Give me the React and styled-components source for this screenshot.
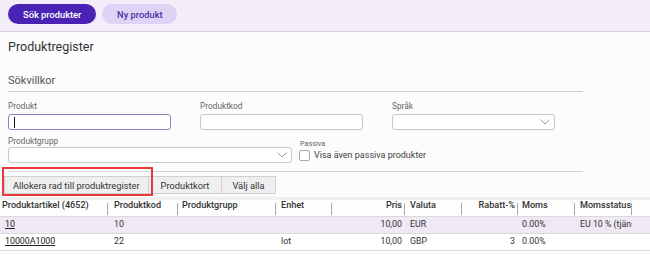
import React from 'react';
import styled, { createGlobalStyle } from 'styled-components';

const GlobalStyle = createGlobalStyle`
  html, body {
    margin: 0;
    padding: 0;
    background: #fcfcfc;
    font-family: Roboto, "Liberation Sans", sans-serif;
    color: #333;
  }
`;

const Page = styled.div`
  width: 650px;
  height: 254px;
  overflow: hidden;
`;

const TopBar = styled.div`
  height: 32px;
  box-sizing: border-box;
  background: #f3ecf9;
  border-bottom: 1px solid #d6d0da;
  padding: 4px 8px 0;
  display: flex;
  gap: 6px;
  align-items: flex-start;
`;

const PillButton = styled.button`
  height: 20px;
  border: none;
  border-radius: 10px;
  padding: 0 ${props => props.primary ? '15px' : '14px'};
  min-width: ${props => props.primary ? 88 : 75}px;
  font-family: inherit;
  font-size: 9.3px;
  font-weight: 500;
  background: ${props => props.primary ? '#4a23b5' : '#ddd3f4'};
  color: ${props => props.primary ? '#ffffff' : '#4b2fa9'};
`;

const Content = styled.div`
  padding: 0 8px;
  width: 575px;
`;

const Title = styled.h1`
  margin: 0;
  padding-top: 7px;
  font-size: 12.5px;
  line-height: 16px;
  font-weight: 400;
  color: #333;
`;

const SectionTitle = styled.h2`
  margin: 19px 0 0;
  font-size: 11px;
  line-height: 14px;
  font-weight: 400;
  color: #555;
  padding-bottom: 3px;
  border-bottom: 1px solid #cfcfcf;
`;

const FieldRow = styled.div`
  display: flex;
  gap: ${props => props.gap}px;
  margin-top: ${props => props.top}px;
`;

const Field = styled.div`
  display: flex;
  flex-direction: column;
  width: ${props => props.width}px;
  padding-top: ${props => props.offset || 0}px;
`;

const Label = styled.label`
  font-size: ${props => props.small ? 7.3 : 8.3}px;
  line-height: 11px;
  height: 11px;
  color: #666;
`;

const InputBox = styled.div`
  height: 16px;
  box-sizing: border-box;
  background: #fff;
  border: 1px solid ${props => props.focused ? '#8b80c6' : '#c8c8c8'};
  border-radius: 3px;
  display: flex;
  align-items: center;
  justify-content: ${props => props.select ? 'flex-end' : 'flex-start'};
  padding: 0 ${props => props.select ? 4 : 5}px;
  margin-top: ${props => props.gapTop}px;
`;

const Caret = styled.span`
  width: 1.2px;
  height: 11px;
  background: #111;
`;

const Chevron = () => (
  <svg width="10" height="6" viewBox="0 0 10 6">
    <polyline points="0.5,0.6 5,5 9.5,0.6" fill="none" stroke="#9c9c9c" strokeWidth="1" />
  </svg>
);

const CheckRow = styled.label`
  display: flex;
  align-items: center;
  gap: 4px;
  margin-top: 1px;
  margin-left: -1px;
  font-size: 9px;
  line-height: 11px;
  color: #444;
`;

const CheckBox = styled.span`
  width: 11px;
  height: 11px;
  box-sizing: border-box;
  border: 1px solid #a8a8a8;
  border-radius: 2px;
  background: #fff;
`;

const Divider = styled.div`
  margin-top: 8px;
  border-top: 1px solid #d6d6d6;
`;

const Toolbar = styled.div`
  display: flex;
  padding-left: 4px;
  margin-top: 4px;
`;

const Marked = styled.div`
  position: relative;
  display: flex;

  &::after {
    content: '';
    position: absolute;
    left: -2px;
    right: -4px;
    top: -9px;
    bottom: -2px;
    border: 2px solid #e8383c;
    pointer-events: none;
  }
`;

const ToolButton = styled.button`
  height: 18px;
  box-sizing: border-box;
  border: 1px solid #d0d0d0;
  border-left-width: ${props => props.joined ? 0 : 1}px;
  background: #efefef;
  font-family: inherit;
  font-size: 9.3px;
  color: #333;
  padding: 0 ${props => props.pad}px;
`;

const Grid = styled.div`
  margin-top: 3px;
  border-top: 3px solid #f0f0f0;
  display: grid;
  grid-template-columns: 108px 70px 98px 56px 73px 57px 56px 57px 57px 18px;
`;

const HeadCell = styled.div`
  position: relative;
  height: 17px;
  box-sizing: border-box;
  border-bottom: 1px solid #dadada;
  background: #fdfdfd;
  padding: 0 3px 0 ${props => props.first ? 2 : props.pad || 5}px;
  font-size: 9.1px;
  line-height: 11px;
  font-weight: 500;
  color: #333;
  text-align: ${props => props.right ? 'right' : 'left'};
  white-space: nowrap;
  overflow: hidden;

  &::after {
    content: '';
    display: ${props => props.noline ? 'none' : 'block'};
    position: absolute;
    right: 0;
    top: 3px;
    bottom: 1px;
    width: 1px;
    background: #aaaaaa;
  }
`;

const Cell = styled.div`
  height: 17px;
  box-sizing: border-box;
  border-bottom: 1px solid #dadada;
  background: ${props => props.alt ? '#efe9f5' : '#ffffff'};
  padding: 0 3px 0 ${props => props.pad || 5}px;
  font-size: 8.8px;
  line-height: 14px;
  color: #333;
  text-align: ${props => props.right ? 'right' : 'left'};
  white-space: nowrap;
  overflow: hidden;
`;

const Link = styled.span`
  text-decoration: underline;
  color: #222;
`;

const columns = [
  { label: 'Produktartikel (4652)', first: true },
  { label: 'Produktkod', pad: 6 },
  { label: 'Produktgrupp', pad: 4 },
  { label: 'Enhet' },
  { label: 'Pris', right: true },
  { label: 'Valuta' },
  { label: 'Rabatt-%', right: true },
  { label: 'Moms', pad: 4 },
  { label: 'Momsstatus' },
  { label: '', noline: true },
];

const rows = [
  ['10', '10', '', '', '10,00', 'EUR', '', '0.00%', 'EU 10 % (tjänster)', ''],
  ['10000A1000', '22', '', 'lot', '10,00', 'GBP', '3', '0.00%', '', ''],
];

const App = () => {
  return (
    <Page>
      <GlobalStyle />
      <TopBar>
        <PillButton primary>Sök produkter</PillButton>
        <PillButton>Ny produkt</PillButton>
      </TopBar>
      <Content>
        <Title>Produktregister</Title>
        <SectionTitle>Sökvillkor</SectionTitle>
        <FieldRow top={9} gap={29}>
          <Field width={163}>
            <Label>Produkt</Label>
            <InputBox focused gapTop={2}><Caret /></InputBox>
          </Field>
          <Field width={163}>
            <Label>Produktkod</Label>
            <InputBox gapTop={2} />
          </Field>
          <Field width={163}>
            <Label>Språk</Label>
            <InputBox select gapTop={2}><Chevron /></InputBox>
          </Field>
        </FieldRow>
        <FieldRow top={6} gap={8}>
          <Field width={284}>
            <Label>Produktgrupp</Label>
            <InputBox select gapTop={0}><Chevron /></InputBox>
          </Field>
          <Field width={200} offset={2}>
            <Label small>Passiva</Label>
            <CheckRow>
              <CheckBox />
              Visa även passiva produkter
            </CheckRow>
          </Field>
        </FieldRow>
        <Divider />
      </Content>
      <Toolbar>
        <Marked>
          <ToolButton pad={8}>Allokera rad till produktregister</ToolButton>
        </Marked>
        <ToolButton joined pad={12}>Produktkort</ToolButton>
        <ToolButton joined pad={10}>Välj alla</ToolButton>
      </Toolbar>
      <Grid>
        {columns.map((c, i) => (
          <HeadCell key={i} first={c.first} right={c.right} pad={c.pad} noline={c.noline}>{c.label}</HeadCell>
        ))}
        {rows.map((r, ri) => r.map((v, ci) => (
          <Cell key={ri + '-' + ci} alt={ri === 0} right={columns[ci].right} pad={columns[ci].pad}>
            {ci === 0 ? <Link>{v}</Link> : v}
          </Cell>
        )))}
      </Grid>
    </Page>
  );
};

export default App;
